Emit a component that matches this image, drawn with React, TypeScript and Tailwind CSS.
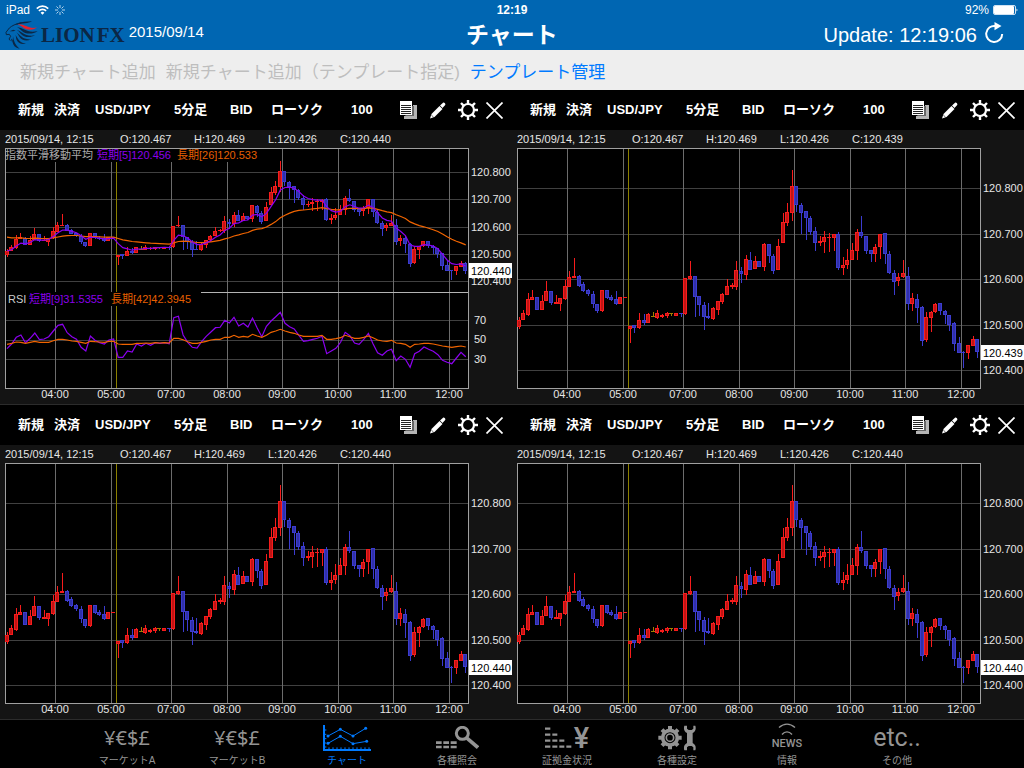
import type { ReactNode } from "react";

// high, body top, body bottom, low (steps below 120.917), r = up, b = down, y = flat
const raw = `547 555 576 583 r|525 534 557 557 r|474 494 541 543 r|465 487 497 497 r|486 488 527 527 b
480 498 527 527 r|438 470 500 500 r|469 470 506 510 b|482 501 507 507 r|491 491 508 530 r
435 454 492 496 r|408 426 458 458 r|370 423 429 431 r|422 423 453 456 b|443 449 468 471 b
463 467 479 483 b|470 478 509 519 b|508 508 530 536 b|466 466 528 532 r|466 466 490 494 b
480 488 496 500 b|470 492 507 510 b|486 487 507 507 r|487 487 490 490 r|573 574 584 624 r
570 571 579 596 b|536 555 581 582 r|538 555 564 570 b|536 537 564 565 r|532 543 545 545 y
526 535 550 552 r|537 542 546 549 r|533 534 543 550 r|534 535 537 543 y|534 534 543 545 r
534 535 539 548 b|430 430 537 540 r|380 423 432 435 r|423 424 486 548 b|484 485 512 543 b
501 510 548 586 b|504 544 550 552 b|516 519 552 556 r|498 500 526 540 r|476 478 502 508 r
433 454 482 482 r|444 452 456 462 r|378 407 457 465 r|396 408 418 445 b|362 373 422 436 r
351 375 406 407 b|363 378 404 404 r|378 379 396 398 b|325 327 396 408 r|327 328 364 386 b
357 364 409 419 b|312 333 407 407 r|234 262 326 326 r|205 231 264 274 r|105 153 234 258 r
153 155 212 231 b|204 210 234 297 b|229 230 251 315 b|244 250 292 300 b|276 288 324 350 b
303 318 324 335 r|288 308 321 356 r|295 307 311 353 r|297 298 310 348 r|291 297 401 405 b
368 392 399 420 r|342 375 392 402 r|324 346 377 377 r|282 291 349 375 r|244 292 304 311 b
303 303 350 359 b|346 346 358 381 b|328 338 357 381 r|297 297 338 372 r|294 295 359 387 b
350 358 416 418 b|405 414 443 480 b|414 427 440 454 r|377 414 428 430 r|396 424 509 527 b
474 491 507 528 r|479 492 519 564 b|513 518 620 633 b|531 546 617 621 r|528 531 551 593 r
505 507 532 535 r|504 505 528 540 b|527 529 542 568 b|541 541 570 588 b|563 565 629 650 b
606 624 655 656 b|648 651 656 699 b|630 631 655 673 r|603 613 633 635 r|612 614 653 670 b`;

const candles = raw.split(/[|\n]/).map((row) => {
  const [high, top, bottom, low, dir] = row.trim().split(" ");
  return { high: +high, top: +top, bottom: +bottom, low: +low, dir };
});

const rsiShort = [
  191, 177, 157, 150, 173, 160, 144, 164, 162, 155, 138, 121, 118, 143, 155, 163, 187, 198, 153, 166,
  173, 177, 165, 162, 217, 217, 198, 201, 177, 183, 175, 181, 173, 175, 173, 176, 98, 94, 150, 172,
  187, 189, 170, 154, 141, 128, 127, 106, 114, 97, 123, 115, 126, 99, 129, 155, 124, 108, 95, 82,
  115, 125, 132, 151, 169, 167, 163, 160, 154, 206, 198, 190, 172, 142, 152, 174, 178, 163, 145, 176,
  203, 211, 198, 193, 227, 213, 223, 247, 206, 199, 186, 193, 199, 209, 226, 232, 236, 219, 202, 215,
];
const rsiLong = [
  178, 175, 171, 172, 175, 172, 169, 172, 172, 172, 167, 163, 163, 165, 168, 169, 172, 175, 169, 170,
  171, 172, 169, 169, 177, 178, 178, 178, 175, 175, 174, 175, 173, 174, 173, 174, 160, 160, 164, 170,
  175, 175, 172, 169, 165, 163, 163, 157, 157, 151, 157, 154, 156, 148, 153, 157, 151, 142, 138, 133,
  138, 142, 145, 150, 154, 154, 154, 154, 151, 163, 163, 161, 158, 151, 155, 160, 160, 157, 153, 158,
  165, 168, 169, 166, 174, 175, 178, 187, 178, 177, 175, 175, 177, 180, 183, 185, 187, 185, 183, 186,
];

const hours = [
  { x: 55, label: "04:00" },
  { x: 111, label: "05:00" },
  { x: 171, label: "07:00" },
  { x: 227, label: "08:00" },
  { x: 282, label: "09:00" },
  { x: 338, label: "10:00" },
  { x: 393, label: "11:00" },
  { x: 449, label: "12:00" },
];
const prices = ["120.800", "120.700", "120.600", "120.500", "120.400"];
const colors: Record<string, [string, string]> = {
  r: ["#f81c1c", "#c01414"],
  b: ["#3c3cd0", "#3030a8"],
  y: ["#a08000", "#a08000"],
};

const xAt = (i: number) => 7 + i * 4.633;

function ema(period: number, seed: number) {
  const k = 2 / (period + 1);
  let value = seed;
  return candles.map((c) => {
    value += ((c.dir === "b" ? c.bottom : c.top) - value) * k;
    return value;
  });
}

function toPoints(values: number[], y: (v: number) => number) {
  return values.map((v, i) => `${xAt(i).toFixed(1)},${y(v).toFixed(1)}`).join(" ");
}

function Chart({ last, indicators }: { last: string; indicators?: boolean }) {
  const scale = indicators ? 0.6 : 1;
  const top = indicators ? 24 : 40;
  const y = (v: number) => top + ((v - 160) / 3) * scale;
  const rsiY = (v: number) => v / 3 + 137;
  const tagY = Math.round(y(651));

  return (
    <svg viewBox="0 0 512 256" className="block w-full" role="img" aria-label={`USD/JPY ${last}`}>
      <rect x="5" y="0" width="464" height="241" fill="#000" />
      <g shapeRendering="crispEdges">
        {prices.map((p, i) => (
          <rect key={p} x="5" y={Math.round(top + i * 45.5 * scale)} width="463" height="1" fill="#404040" />
        ))}
        {indicators &&
          [172, 192, 211].map((ly) => <rect key={ly} x="5" y={ly} width="463" height="1" fill="#404040" />)}
        {hours.map((h) => (
          <rect key={h.x} x={h.x} y="0" width="1" height="240" fill="#6c6c6c" />
        ))}
        <rect x="116" y="0" width="1" height="240" fill="#8c8000" />
        {indicators && <rect x="5" y="144" width="463" height="1" fill="#b4b4b4" />}
        <rect x="5" y="0" width="463" height="1" fill="#a0a0a0" />
        <rect x="5" y="240" width="464" height="1" fill="#a0a0a0" />
        <rect x="5" y="0" width="1" height="240" fill="#a0a0a0" />
        <rect x="468" y="0" width="1" height="240" fill="#a0a0a0" />
      </g>

      {/* Candles */}
      <g shapeRendering="crispEdges">
        {candles.map((c, i) => {
          const x = Math.round(xAt(i) - 0.5);
          const bodyTop = Math.round(y(c.top));
          const height = Math.max(1, Math.round(y(c.bottom)) - bodyTop);
          const [edge, fill] = colors[c.dir];
          const left = Math.max(5, x - 2);
          const width = Math.min(x + 2, 468) - left;
          return (
            <g key={i}>
              <rect x={x} y={y(c.high)} width="1" height={y(c.low) - y(c.high)} fill={edge} />
              <rect x={left} y={bodyTop} width={width} height={height} fill={edge} />
              {height > 2 && (
                <rect x={left + 1} y={bodyTop + 1} width={width - 2} height={height - 2} fill={fill} />
              )}
            </g>
          );
        })}
      </g>

      {indicators && (
        <>
          <g fill="none" strokeWidth="1.2">
            <polyline points={toPoints(ema(26, 480), y)} stroke="#f06400" />
            <polyline points={toPoints(ema(5, 555), y)} stroke="#8c00f0" />
            <polyline points={toPoints(rsiShort, rsiY)} stroke="#8c00f0" />
            <polyline points={toPoints(rsiLong, rsiY)} stroke="#f06400" />
          </g>
          <rect x="6" y="1" width="257" height="13" fill="#000" />
          <rect x="6" y="144" width="195" height="14" fill="#000" />
          <g fontSize="11">
            <text x="5" y="11" fill="#aaa">指数平滑移動平均</text>
            <text x="97" y="11" fill="#8c00eb">短期[5]120.456</text>
            <text x="177" y="11" fill="#e65f00">長期[26]120.533</text>
            <text x="8" y="155" fill="#ccc">RSI</text>
            <text x="29" y="155" fill="#8c00eb">短期[9]31.5355</text>
            <text x="111" y="155" fill="#e65f00">長期[42]42.3945</text>
          </g>
        </>
      )}

      {/* Axis labels */}
      <g fontSize="11" fill="#e6e6e6">
        {prices.map((p, i) => (
          <text key={p} x="471" y={Math.round(top + i * 45.5 * scale) + 4}>
            {p}
          </text>
        ))}
        {indicators && (
          <>
            <text x="474" y="176">70</text>
            <text x="474" y="195">50</text>
            <text x="474" y="215">30</text>
          </>
        )}
        {hours.map((h) => (
          <text key={h.x} x={h.x} y="250" textAnchor="middle">
            {h.label}
          </text>
        ))}
      </g>
      <rect x="469" y={tagY - 7} width="43" height="15" fill="#fff" />
      <text x="471" y={tagY + 5} fontSize="11" fill="#000">
        {last}
      </text>
    </svg>
  );
}

function ListIcon() {
  return (
    <svg width="17" height="18" viewBox="0 0 17 18">
      <path d="M13 4h4v14H4v-3h9z" fill="#b4b4b4" />
      <path d="M12 5h2v10H5" fill="#666" />
      <path d="M0 0h12v14H0z" fill="#fff" />
      <path d="M1 4.500h10M1 6.500h10M1 8.500h10M1 10.500h10M1 12.500h10" stroke="#222" />
    </svg>
  );
}

function PencilIcon() {
  return (
    <svg width="16" height="17" viewBox="0 0 16 17">
      <path d="M0 16.500l1.500-4.500 8-8 3 3-8 8z" fill="#fff" />
      <path d="M10 3.500L13 .7c1-.8 3 1.200 2.200 2.200l-2.700 3z" fill="#fff" />
      <path d="M1.300 13l2.300 2.200" stroke="#000" strokeWidth=".6" />
    </svg>
  );
}

function GearIcon() {
  return (
    <svg width="20" height="20" viewBox="0 0 20 20" fill="none" stroke="#fff">
      <circle cx="10" cy="10" r="6" strokeWidth="2.200" />
      <path
        d="M10 0v4M10 16v4M0 10h4M16 10h4M3 3l2.600 2.600M14.400 14.400L17 17M3 17l2.600-2.600M14.400 5.600L17 3"
        strokeWidth="2.400"
      />
    </svg>
  );
}

function CloseIcon() {
  return (
    <svg width="17" height="17" viewBox="0 0 17 17" stroke="#fff" strokeWidth="1.700">
      <path d="M.5.5l16 16M16.500.5l-16 16" />
    </svg>
  );
}

const tools = [
  { label: "新規" },
  { label: "決済" },
  { label: "USD/JPY" },
  { label: "5分足" },
  { label: "BID" },
  { label: "ローソク" },
  { label: "100" },
  { label: "一覧", icon: <ListIcon /> },
  { label: "描画", icon: <PencilIcon /> },
  { label: "設定", icon: <GearIcon /> },
  { label: "閉じる", icon: <CloseIcon /> },
];

function ChartPanel({ last, indicators }: { last: string; indicators?: boolean }) {
  return (
    <section className="min-w-0 border-b border-[#2c2c2c] bg-[#141414]">
      <div className="grid h-10 grid-cols-[36fr_41fr_79fr_56fr_41fr_80fr_49fr_30fr_28fr_28fr_26fr] items-center bg-black pl-[18px] text-[13px] font-bold leading-5 text-white">
        {tools.map((tool) => (
          <button
            key={tool.label}
            type="button"
            aria-label={tool.icon ? tool.label : undefined}
            className="flex min-w-0 cursor-pointer items-center whitespace-nowrap"
          >
            {tool.icon ?? tool.label}
          </button>
        ))}
      </div>
      <div className="grid h-[18px] grid-cols-[115fr_74fr_74fr_72fr_172fr] items-center whitespace-nowrap pl-[5px] text-[11px] leading-4 text-[#e6e6e6]">
        <span>2015/09/14, 12:15</span>
        <span>O:120.467</span>
        <span>H:120.469</span>
        <span>L:120.426</span>
        <span>C:{last}</span>
      </div>
      <Chart last={last} indicators={indicators} />
    </section>
  );
}

function Lion() {
  return (
    <svg width="34" height="28" viewBox="0 0 102 84" fill="#0b2745">
      {/* Brow, nose and jaw */}
      <path
        d="M50 5C32 8 20 15 13 21L3 34l1 7 9-1 4 6-5 8 4 5"
        fill="none"
        stroke="#0b2745"
        strokeWidth="3"
      />
      <path d="M14 31l11-5 7 3-8 2z" />
      <path d="M34 8C50 2 66 2 81 1 70 8 52 6 34 12z" />
      {/* Mane */}
      <path d="M38 10c22-2 34 16 58 9-10 10-31 8-41 1-6-5-11-7-17-10z" fill="#e8202a" />
      <path d="M36 19c20 1 31 19 62 11-16 12-38 9-48-1-4-4-8-7-14-10z" />
      <path d="M35 26c16 5 24 22 55 17-15 9-34 6-42-4-4-5-7-9-13-13z" />
      <path d="M34 34c11 7 18 23 44 21-13 7-29 3-35-8-3-5-5-9-9-13z" />
      <path d="M31 41c7 9 12 25 32 27-13 4-25-2-29-13-1-5-1-10-3-14z" />
      <path d="M24 46c2 12 6 27 20 37-13-1-21-11-21-22z" />
      <path d="M17 52l6 5-1 8z" />
    </svg>
  );
}

function Header() {
  return (
    <header className="bg-[#0066b2] text-white">
      <div className="grid h-5 grid-cols-3 items-center px-1.5 text-xs leading-4">
        <div className="flex items-center gap-1.5">
          <span>iPad</span>
          <svg width="13" height="10" viewBox="0 0 13 10" fill="none" stroke="#fff" strokeWidth="1.700">
            <path d="M.8 3.600a8 8 0 0 1 11.400 0M2.900 5.900a5 5 0 0 1 7.200 0" />
            <path d="M6.500 9.800L4.600 7.800a2.700 2.700 0 0 1 3.800 0z" fill="#fff" stroke="none" />
          </svg>
          <svg width="10" height="10" viewBox="0 0 10 10" stroke="#b4d4ec" strokeWidth="1">
            <path d="M5 0v3M5 7v3M0 5h3M7 5h3M1.500 1.500l2 2M6.500 6.500l2 2M1.500 8.500l2-2M6.500 3.500l2-2" />
          </svg>
        </div>
        <span className="text-center font-bold">12:19</span>
        <div className="flex items-center justify-end gap-1">
          <span>92%</span>
          <svg width="25" height="10" viewBox="0 0 25 10">
            <rect x=".5" y=".5" width="22" height="9" rx="1.500" fill="none" stroke="#cfe2f2" />
            <rect x="1" y="1" width="20" height="8" rx="1" fill="#fff" />
            <path d="M23.500 3.500v3l1.200-1.500z" fill="#fff" />
          </svg>
        </div>
      </div>
      <div className="grid h-[30px] grid-cols-3 items-center">
        <div className="flex h-[30px] items-center pl-[5px]">
          <Lion />
          <span className="ml-0.5 flex gap-0.5 font-['Liberation_Serif',serif] text-[21px] font-bold leading-6 text-[#0b2745]">
            <span>LION</span>
            <span>FX</span>
          </span>
          <span className="ml-1 pb-1.5 text-[15px] leading-5">2015/09/14</span>
        </div>
        <h1 className="text-center text-[23px] font-bold leading-7">チャート</h1>
        <div className="flex items-center justify-end gap-2 pr-5">
          <span className="whitespace-nowrap text-xl leading-7">Update: 12:19:06</span>
          <button type="button" aria-label="更新" className="cursor-pointer pb-1">
            <svg width="19" height="22" viewBox="0 0 19 22">
              <path d="M10.500 4A8 8 0 1 0 17.200 12" fill="none" stroke="#fff" strokeWidth="2" />
              <path d="M9.500 0l7 4-7 4.300z" fill="#fff" />
            </svg>
          </button>
        </div>
      </div>
    </header>
  );
}

const gray = "#949494";

function TabGraph() {
  return (
    <svg width="48" height="26" viewBox="0 0 144 78" fill="none" stroke="currentColor">
      <path d="M3 0v75h141" strokeWidth="6" />
      <path
        d="M6 15h4M6 28h4M6 41h4M6 54h4M6 66h4M18 72v-5M30 72v-5M42 72v-5M54 72v-5M66 72v-5M78 72v-5M90 72v-5M102 72v-5M114 72v-5M126 72v-5M138 72v-5"
        strokeWidth="3"
      />
      <path d="M15 33l37-20 38 20 38-23M15 55l37-21 38 22 41-7" strokeWidth="3" />
      <g fill="currentColor" stroke="none">
        {[[15, 33], [52, 13], [90, 33], [128, 10], [15, 55], [52, 34], [90, 56], [131, 49]].map(([cx, cy]) => (
          <circle key={`${cx}-${cy}`} cx={cx} cy={cy} r="4.500" />
        ))}
      </g>
    </svg>
  );
}

function TabSearch() {
  return (
    <svg width="43" height="24" viewBox="0 0 129 72" fill={gray}>
      <path d="M0 46h17v8H0zM22 46h17v8H22zM44 46h18v8H44zM0 59h17v8H0zM22 59h17v8H22zM44 59h18v8H44z" />
      <circle cx="79" cy="22" r="18" fill="none" stroke={gray} strokeWidth="9" />
      <path d="M91 35l35 30" stroke={gray} strokeWidth="11" />
    </svg>
  );
}

function TabMargin() {
  return (
    <span className="flex items-center gap-0.5">
      <svg width="27" height="22" viewBox="0 0 81 66" fill="none" stroke={gray} strokeWidth="7">
        <path d="M0 5h16M0 23h16M22 23h15M0 41h16M22 41h15M43 41h15M0 59h16M22 59h15M43 59h15M64 59h15" />
      </svg>
      <span className="font-[Roboto,sans-serif] text-[29px] font-medium leading-7">¥</span>
    </span>
  );
}

function TabTools() {
  return (
    <svg width="38" height="26" viewBox="0 0 114 78" fill="none" stroke={gray}>
      <circle cx="36" cy="38" r="22" strokeWidth="11" />
      <circle cx="36" cy="38" r="11" strokeWidth="5" />
      <g strokeWidth="12">
        <path d="M36 3v10M36 63v10M1 38h10M61 38h10" />
        <path d="M12 14l8 8M52 54l8 8M12 62l8-8M52 22l8-8" />
      </g>
      <path
        d="M79 2l8 0v9l5 4h9l5-4V2h6c3 11 0 18-8 22v30c8 4 11 12 8 22h-6v-9l-5-4h-9l-5 4v9h-8c-3-10 0-18 8-22V24c-8-4-11-11-8-22z"
        fill={gray}
        stroke="none"
      />
    </svg>
  );
}

function TabNews() {
  return (
    <span className="flex flex-col items-center font-[Roboto,sans-serif] text-[11px] font-medium leading-4">
      <svg width="18" height="13" viewBox="0 0 18 13" fill="none" stroke={gray} strokeWidth="1.400">
        <path d="M1 4.500c5-4.500 11-4.500 16 0M4 11.500c3-3.500 7-3.500 10 0" />
      </svg>
      NEWS
    </span>
  );
}

function Currency() {
  return <span className="font-['Noto_Sans',sans-serif] text-xl leading-6">¥€$£</span>;
}

const tabs: { label: string; icon: ReactNode; active?: boolean }[] = [
  { label: "マーケットA", icon: <Currency /> },
  { label: "マーケットB", icon: <Currency /> },
  { label: "チャート", icon: <TabGraph />, active: true },
  { label: "各種照会", icon: <TabSearch /> },
  { label: "証拠金状況", icon: <TabMargin /> },
  { label: "各種設定", icon: <TabTools /> },
  { label: "情報", icon: <TabNews /> },
  {
    label: "その他",
    icon: <span className="font-[Roboto,sans-serif] text-[25px] leading-7">etc..</span>,
  },
];

export default function App() {
  return (
    <div className="min-h-screen bg-black font-['Liberation_Sans','Noto_Sans_CJK_JP',sans-serif]">
      <Header />

      {/* Chart actions */}
      <div className="flex h-10 items-center gap-2.5 whitespace-nowrap bg-[#eee] px-5 pt-1.5 text-[17px] leading-6">
        <button type="button" disabled className="text-[#bebebe]">
          新規チャート追加
        </button>
        <button type="button" disabled className="text-[#bebebe]">
          新規チャート追加（テンプレート指定)
        </button>
        <button type="button" className="cursor-pointer text-[#007aff]">
          テンプレート管理
        </button>
      </div>

      <main className="grid grid-cols-2">
        <ChartPanel last="120.440" indicators />
        <ChartPanel last="120.439" />
        <ChartPanel last="120.440" />
        <ChartPanel last="120.440" />
      </main>

      <nav className="flex h-12 justify-center bg-black">
        {tabs.map((tab) => (
          <a
            key={tab.label}
            href="#"
            aria-current={tab.active ? "page" : undefined}
            className={`flex w-[110px] flex-col items-center ${tab.active ? "text-[#007aff]" : "text-[#949494]"}`}
          >
            <span className="flex h-[35px] items-center">{tab.icon}</span>
            <span className="text-[10px] leading-3">{tab.label}</span>
          </a>
        ))}
      </nav>
    </div>
  );
}
